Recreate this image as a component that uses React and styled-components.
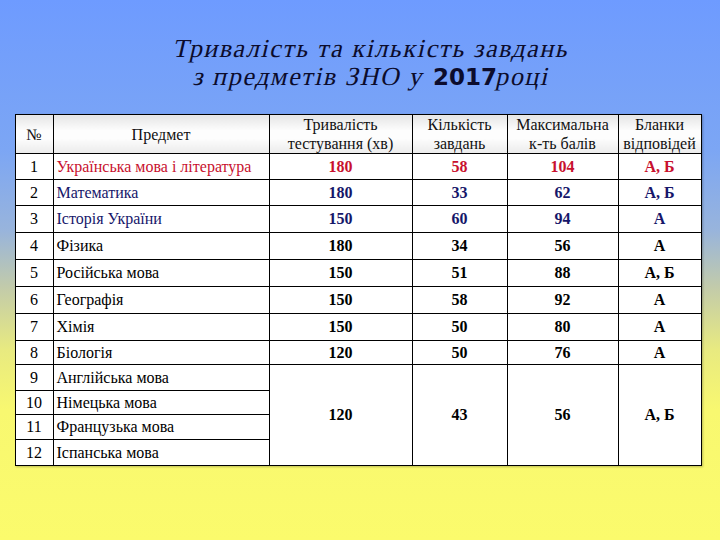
import styled, { createGlobalStyle } from "styled-components";

const GlobalStyle = createGlobalStyle`
  html, body {
    margin: 0;
    padding: 0;
  }
  body {
    font-family: "Liberation Serif", "Times New Roman", serif;
  }
`;

const Slide = styled.div`
  width: 720px;
  height: 540px;
  overflow: hidden;
  background: linear-gradient(
    to bottom,
    #6e9bff 0px,
    #7ca6f4 150px,
    #98b4dc 230px,
    #c4cca8 290px,
    #e8ea80 350px,
    #f8f870 410px,
    #fbfb6c 540px
  );
  display: flex;
  flex-direction: column;
  align-items: center;
`;

const Title = styled.div`
  margin: 35px 0 0 24px;
  font-family: "Liberation Serif", "Times New Roman", serif;
  font-weight: normal;
  font-size: 26px;
  line-height: 28px;
  letter-spacing: 1.6px;
  color: #0c0c2c;
  text-align: center;
`;

/* no italic face for the serif here, so slant the upright one */
const Slant = styled.span`
  display: inline-block;
  transform: skewX(-13deg);
  white-space: nowrap;
`;

const Year = styled.span`
  display: inline-block;
  transform: skewX(13deg);
  font-family: "DejaVu Sans", Verdana, sans-serif;
  font-weight: bold;
  font-size: 23px;
  letter-spacing: 0;
`;

const Table = styled.table`
  margin-top: 23px;
  margin-left: -4px;
  width: 686px;
  border-collapse: collapse;
  table-layout: fixed;
  background: #fff;
  font-size: 16px;
  color: #000;
  box-shadow: 1px 1px 2px rgba(0, 0, 0, 0.25);
`;

const HeadCell = styled.th`
  border: 1px solid #000;
  height: 38px;
  padding: 0;
  font-weight: normal;
  font-size: 16px;
  line-height: 19px;
  color: #111;
  background: linear-gradient(to bottom, #e6e6e6, #fdfdfd 40%, #fdfdfd 60%, #ebebeb);
  text-align: center;
  vertical-align: middle;
  white-space: nowrap;
`;

const tones = {
  red: "#c8102e",
  navy: "#16166a",
  black: "#000",
};

const Row = styled.tr`
  height: ${(p) => p.$h}px;
  color: ${(p) => tones[p.$tone]};
`;

const NumCell = styled.td`
  border: 1px solid #000;
  padding: 0;
  text-align: center;
  color: #000;
  vertical-align: middle;
`;

const SubjectCell = styled.td`
  border: 1px solid #000;
  padding: 0 0 0 3px;
  text-align: left;
  vertical-align: middle;
  white-space: nowrap;
`;

const ValueCell = styled.td`
  border: 1px solid #000;
  padding: 0;
  text-align: center;
  font-weight: bold;
  vertical-align: middle;
`;

const rows = [
  { n: 1, s: "Українська мова і література", v: ["180", "58", "104", "А, Б"], tone: "red", h: 26 },
  { n: 2, s: "Математика", v: ["180", "33", "62", "А, Б"], tone: "navy", h: 26 },
  { n: 3, s: "Історія України", v: ["150", "60", "94", "А"], tone: "navy", h: 27 },
  { n: 4, s: "Фізика", v: ["180", "34", "56", "А"], tone: "black", h: 27 },
  { n: 5, s: "Російська мова", v: ["150", "51", "88", "А, Б"], tone: "black", h: 27 },
  { n: 6, s: "Географія", v: ["150", "58", "92", "А"], tone: "black", h: 27 },
  { n: 7, s: "Хімія", v: ["150", "50", "80", "А"], tone: "black", h: 27 },
  { n: 8, s: "Біологія", v: ["120", "50", "76", "А"], tone: "black", h: 24 },
];

const languages = [
  { n: 9, s: "Англійська мова", h: 26 },
  { n: 10, s: "Німецька мова", h: 24 },
  { n: 11, s: "Французька мова", h: 25 },
  { n: 12, s: "Іспанська мова", h: 26 },
];

const shared = ["120", "43", "56", "А, Б"];

export default function App() {
  return (
    <>
      <GlobalStyle />
      <Slide>
        <Title>
          <Slant>Тривалість та кількість завдань</Slant>
          <br />
          <Slant>
            з предметів ЗНО у <Year>2017</Year>році
          </Slant>
        </Title>
        <Table>
          <colgroup>
            <col style={{ width: 38 }} />
            <col style={{ width: 216 }} />
            <col style={{ width: 143 }} />
            <col style={{ width: 95 }} />
            <col style={{ width: 111 }} />
            <col style={{ width: 83 }} />
          </colgroup>
          <thead>
            <tr>
              <HeadCell>№</HeadCell>
              <HeadCell>Предмет</HeadCell>
              <HeadCell>
                Тривалість
                <br />
                тестування (хв)
              </HeadCell>
              <HeadCell>
                Кількість
                <br />
                завдань
              </HeadCell>
              <HeadCell>
                Максимальна
                <br />
                к-ть балів
              </HeadCell>
              <HeadCell>
                Бланки
                <br />
                відповідей
              </HeadCell>
            </tr>
          </thead>
          <tbody>
            {rows.map((r) => (
              <Row key={r.n} $h={r.h} $tone={r.tone}>
                <NumCell>{r.n}</NumCell>
                <SubjectCell>{r.s}</SubjectCell>
                {r.v.map((v, i) => (
                  <ValueCell key={i}>{v}</ValueCell>
                ))}
              </Row>
            ))}
            {languages.map((r, idx) => (
              <Row key={r.n} $h={r.h} $tone="black">
                <NumCell>{r.n}</NumCell>
                <SubjectCell>{r.s}</SubjectCell>
                {idx === 0 &&
                  shared.map((v, i) => (
                    <ValueCell key={i} rowSpan={4}>
                      {v}
                    </ValueCell>
                  ))}
              </Row>
            ))}
          </tbody>
        </Table>
      </Slide>
    </>
  );
}
